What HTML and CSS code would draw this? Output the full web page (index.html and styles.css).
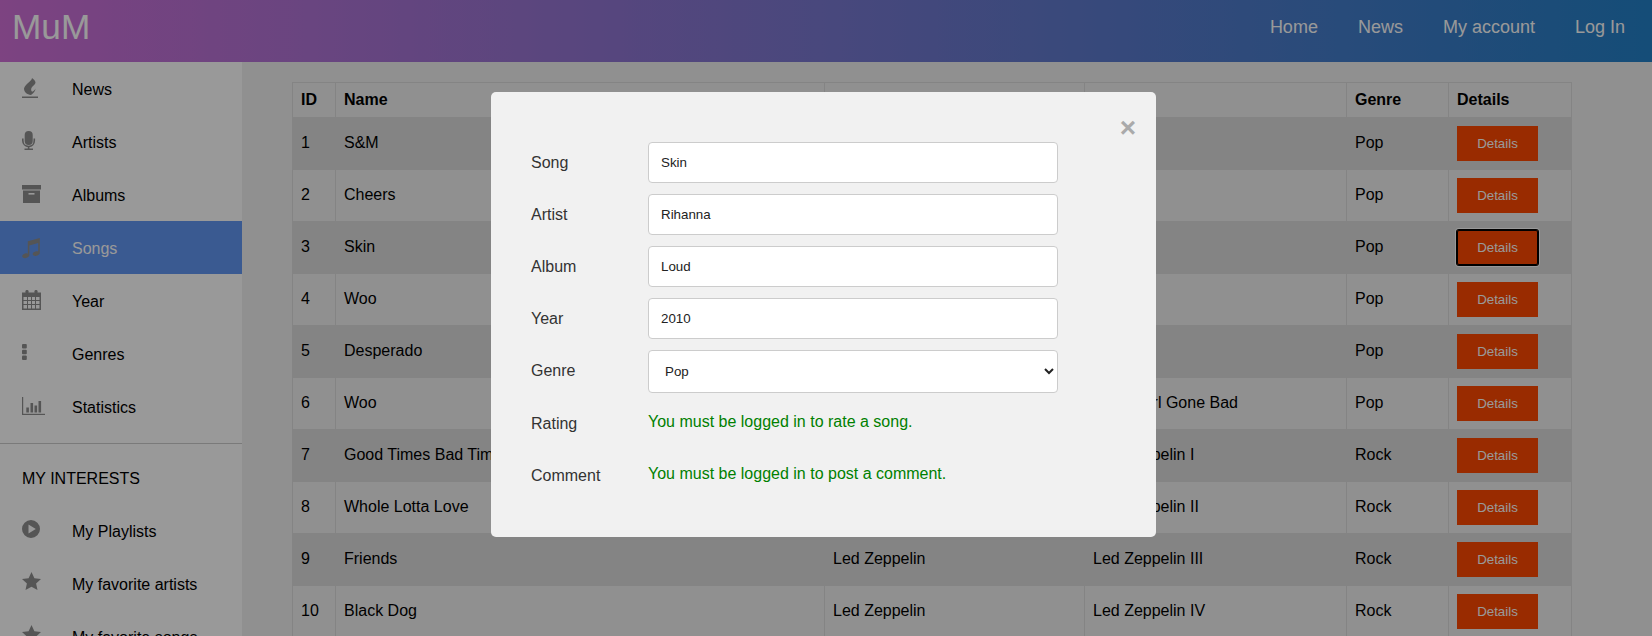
FILE: index.html
```html
<!DOCTYPE html>
<html lang="en">
<head>
  <meta charset="UTF-8">
  <meta name="viewport" content="width=device-width, initial-scale=1.0">
  <title>MuM - Songs</title>
  <link rel="stylesheet" href="styles.css">
</head>
<body>

<!-- Top bar -->
<header class="topbar">
  <a class="logo" href="#">MuM</a>
  <nav class="topnav">
    <a href="#">Home</a>
    <a href="#">News</a>
    <a href="#">My account</a>
    <a href="#">Log In</a>
  </nav>
</header>

<div class="layout">
  <!-- Sidebar -->
  <aside class="sidebar">
    <a class="side-item" href="#">
      <svg class="side-icon" viewBox="0 0 50 31"><path d="M10 5C10 8 3 11 2 15.500C2 19 5 21.500 9 22C11 20.500 13.500 18.500 13.500 15.500C13 17 11.500 18.500 10 18.800C8.500 17 9 15 10.500 13.500C12 12 13.500 11 13.500 9.500C13.500 7.500 11.500 6.500 10 5Z"/><rect x="0" y="23.500" width="16" height="1.500"/></svg>
      News
    </a>
    <a class="side-item" href="#">
      <svg class="side-icon" viewBox="0 0 50 31"><rect x="2.700" y="5" width="8" height="14" rx="4"/><path class="line" d="M.8 12.500V14.500C.8 18 3.300 20.500 6.700 20.500C10 20.500 12.300 18 12.300 14.500V12.500"/><rect x="5.800" y="20.500" width="1.600" height="2.500"/><rect x="2.500" y="22.500" width="8.500" height="1.500"/></svg>
      Artists
    </a>
    <a class="side-item" href="#">
      <svg class="side-icon" viewBox="0 0 50 31"><rect x="0" y="6" width="19" height="4.500"/><rect x="1" y="11.500" width="17" height="12.500"/><rect class="cut" x="6.500" y="14" width="6" height="1.600"/></svg>
      Albums
    </a>
    <a class="side-item active" href="#">
      <svg class="side-icon" viewBox="0 0 50 31"><path d="M17.800 6L5.800 9.200V21.800C5 21.300 4 21.200 3 21.500C1 22 0 23.400 .3 24.700C.7 25.900 2.300 26.500 4.200 26C6 25.500 7.400 24.300 7.400 23V13.500L16.200 11V19.600C15.400 19.200 14.400 19.100 13.400 19.400C11.500 19.900 10.400 21.200 10.700 22.500C11.100 23.700 12.800 24.300 14.600 23.800C16.500 23.300 17.800 22 17.800 20.700Z"/></svg>
      Songs
    </a>
    <a class="side-item" href="#">
      <svg class="side-icon" viewBox="0 0 50 31"><rect x="3.500" y="5" width="3" height="5" rx="1.200"/><rect x="12.500" y="5" width="3" height="5" rx="1.200"/><path d="M0 7.500H19V25H0ZM1.500 12V23.500H17.500V12Z" fill-rule="evenodd"/><path class="thin" d="M1 15.500H18M1 19.500H18M5.500 12V24M9.500 12V24M13.500 12V24"/></svg>
      Year
    </a>
    <a class="side-item" href="#">
      <svg class="side-icon" viewBox="0 0 50 31"><rect x="0" y="6" width="4.800" height="4.500" rx="1"/><rect x="0" y="11.800" width="4.800" height="4.500" rx="1"/><rect x="0" y="17.500" width="4.800" height="4.500" rx="1"/></svg>
      Genres
    </a>
    <a class="side-item" href="#">
      <svg class="side-icon" viewBox="0 0 50 31"><rect x="0" y="6" width="1.200" height="18"/><rect x="0" y="22.800" width="23" height="1.200"/><rect x="4.300" y="16.500" width="2.600" height="5"/><rect x="8.500" y="12" width="2.600" height="9.500"/><rect x="12.500" y="14.500" width="2.600" height="7"/><rect x="16.500" y="10" width="2.600" height="11.500"/></svg>
      Statistics
    </a>

    <div class="side-title">MY INTERESTS</div>

    <a class="side-item" href="#">
      <svg class="side-icon" viewBox="0 0 50 31"><path d="M9 5A9 9 0 1 1 9 23A9 9 0 1 1 9 5ZM6.500 9.500V18.500L13.800 14Z" fill-rule="evenodd"/></svg>
      My Playlists
    </a>
    <a class="side-item" href="#">
      <svg class="side-icon" viewBox="0 0 50 31"><path d="M9.500 4L12.400 10.300L19 11L14.100 15.500L15.500 22L9.500 18.700L3.500 22L4.900 15.500L0 11L6.600 10.300Z"/></svg>
      My favorite artists
    </a>
    <a class="side-item" href="#">
      <svg class="side-icon" viewBox="0 0 50 31"><path d="M9.500 4L12.400 10.300L19 11L14.100 15.500L15.500 22L9.500 18.700L3.500 22L4.900 15.500L0 11L6.600 10.300Z"/></svg>
      My favorite songs
    </a>
  </aside>

  <!-- Song table -->
  <main class="content">
    <table class="songs">
      <colgroup>
        <col class="col-id">
        <col class="col-name">
        <col class="col-artist">
        <col class="col-album">
        <col class="col-genre">
        <col class="col-details">
      </colgroup>
      <thead>
        <tr><th>ID</th><th>Name</th><th>Artist</th><th>Album</th><th>Genre</th><th>Details</th></tr>
      </thead>
      <tbody>
        <tr><td>1</td><td>S&amp;M</td><td>Rihanna</td><td>Loud</td><td>Pop</td><td class="btn-cell"><button class="details-btn">Details</button></td></tr>
        <tr><td>2</td><td>Cheers</td><td>Rihanna</td><td>Loud</td><td>Pop</td><td class="btn-cell"><button class="details-btn">Details</button></td></tr>
        <tr><td>3</td><td>Skin</td><td>Rihanna</td><td>Loud</td><td>Pop</td><td class="btn-cell"><button class="details-btn focused">Details</button></td></tr>
        <tr><td>4</td><td>Woo</td><td>Rihanna</td><td>Anti</td><td>Pop</td><td class="btn-cell"><button class="details-btn">Details</button></td></tr>
        <tr><td>5</td><td>Desperado</td><td>Rihanna</td><td>Anti</td><td>Pop</td><td class="btn-cell"><button class="details-btn">Details</button></td></tr>
        <tr><td>6</td><td>Woo</td><td>Rihanna</td><td>Good Girl Gone Bad</td><td>Pop</td><td class="btn-cell"><button class="details-btn">Details</button></td></tr>
        <tr><td>7</td><td>Good Times Bad Times</td><td>Led Zeppelin</td><td>Led Zeppelin I</td><td>Rock</td><td class="btn-cell"><button class="details-btn">Details</button></td></tr>
        <tr><td>8</td><td>Whole Lotta Love</td><td>Led Zeppelin</td><td>Led Zeppelin II</td><td>Rock</td><td class="btn-cell"><button class="details-btn">Details</button></td></tr>
        <tr><td>9</td><td>Friends</td><td>Led Zeppelin</td><td>Led Zeppelin III</td><td>Rock</td><td class="btn-cell"><button class="details-btn">Details</button></td></tr>
        <tr><td>10</td><td>Black Dog</td><td>Led Zeppelin</td><td>Led Zeppelin IV</td><td>Rock</td><td class="btn-cell"><button class="details-btn">Details</button></td></tr>
      </tbody>
    </table>
  </main>
</div>

<!-- Song details modal -->
<div class="overlay">
  <div class="modal">
    <span class="close">&times;</span>
    <form>
      <div class="form-row">
        <label for="song">Song</label>
        <input type="text" id="song" value="Skin">
      </div>
      <div class="form-row">
        <label for="artist">Artist</label>
        <input type="text" id="artist" value="Rihanna">
      </div>
      <div class="form-row">
        <label for="album">Album</label>
        <input type="text" id="album" value="Loud">
      </div>
      <div class="form-row">
        <label for="year">Year</label>
        <input type="text" id="year" value="2010">
      </div>
      <div class="form-row select-row">
        <label for="genre">Genre</label>
        <select id="genre"><option>Pop</option><option>Rock</option></select>
      </div>
      <div class="form-row">
        <label>Rating</label>
        <p class="login-note">You must be logged in to rate a song.</p>
      </div>
      <div class="form-row">
        <label>Comment</label>
        <p class="login-note">You must be logged in to post a comment.</p>
      </div>
    </form>
  </div>
</div>

</body>
</html>
```

FILE: styles.css
```css
html, body {
  height: 100%;
}

body {
  margin: 0;
  overflow: hidden;
  font-family: "Liberation Sans", Arial, sans-serif;
  font-size: 16px;
  color: #000;
  background-color: #f1f1f1;
}

a {
  text-decoration: none;
  color: inherit;
}

/* Top bar */
.topbar {
  display: flex;
  justify-content: space-between;
  height: 62px;
  padding: 0 27px 0 12px;
  box-sizing: border-box;
  background: linear-gradient(to right, #d070d8, #2380c8);
  color: #fff;
}

.logo {
  font-size: 35.2px;
  line-height: 53px;
}

.topnav {
  display: flex;
  gap: 40px;
  font-size: 18px;
  line-height: 54px;
}

/* Sidebar */
.layout {
  display: flex;
}

.sidebar {
  width: 242px;
  flex-shrink: 0;
  height: 574px;
  overflow: hidden;
  background-color: #fff;
}

.side-item {
  display: flex;
  align-items: center;
  height: 53px;
  padding: 2px 0 0 22px;
  box-sizing: border-box;
  line-height: 20px;
}

.side-item.active {
  background-color: #6296f2;
  color: #fff;
}

.side-icon {
  width: 50px;
  height: 31px;
  flex-shrink: 0;
  margin-top: -2px;
  fill: #8e8e8e;
}

.side-icon .line {
  fill: none;
  stroke: #8e8e8e;
  stroke-width: 1.6;
}

.side-icon .thin {
  fill: none;
  stroke: #8e8e8e;
  stroke-width: 1;
}

.side-icon .cut {
  fill: #fff;
}

.side-title {
  margin-top: 10px;
  padding: 26px 22px 16px;
  border-top: 1px solid #ccc;
  line-height: 18px;
}

/* Song table */
.content {
  flex: 1;
  padding: 20px 80px 0 50px;
}

.songs {
  width: 1279px;
  table-layout: fixed;
  border-collapse: collapse;
}

.col-id { width: 43px; }
.col-name { width: 489px; }
.col-artist { width: 260px; }
.col-album { width: 262px; }
.col-genre { width: 102px; }
.col-details { width: 123px; }

.songs th,
.songs td {
  padding: 8px;
  border: 1px solid #ddd;
  text-align: left;
  line-height: 18px;
}

.songs td {
  padding: 7px 8px 9px;
}

.songs td.btn-cell {
  padding: 8px;
}

.songs tbody tr:nth-child(odd) {
  background-color: #ddd;
}

.details-btn {
  display: block;
  width: 81px;
  height: 35px;
  padding: 0;
  border: none;
  background-color: #ff4800;
  color: #fff;
  font-family: "Liberation Sans", Arial, sans-serif;
  font-size: 13.33px;
}

.details-btn.focused {
  border-radius: 2px;
  box-shadow: 0 0 0 1px #000, 0 0 0 2px #fff;
  outline: 1px solid #000;
  outline-offset: -1px;
}

/* Modal */
.overlay {
  position: fixed;
  top: 0;
  left: 0;
  right: 0;
  bottom: 0;
  display: flex;
  justify-content: center;
  align-items: flex-start;
  padding: 92px 5px 0 0;
  background-color: rgba(0, 0, 0, 0.4);
}

.modal {
  position: relative;
  width: 665px;
  height: 445px;
  padding: 50px 0 0 40px;
  box-sizing: border-box;
  border-radius: 5px;
  background-color: #f1f1f1;
  color: #333;
}

.close {
  position: absolute;
  top: 20px;
  right: 20px;
  color: #aaa;
  font-size: 28px;
  font-weight: bold;
  line-height: 32px;
}

.form-row {
  display: flex;
  margin-bottom: 11px;
  min-height: 41px;
}

.form-row.select-row {
  margin-bottom: 10px;
}

.form-row label {
  width: 117px;
  flex-shrink: 0;
  padding-top: 11px;
  line-height: 20px;
}

.form-row input,
.form-row select {
  width: 410px;
  box-sizing: border-box;
  border: 1px solid #ccc;
  border-radius: 4px;
  background-color: #fff;
  color: #222;
  font-family: "Liberation Sans", Arial, sans-serif;
  font-size: 13.33px;
}

.form-row input {
  height: 41px;
  padding: 0 12px;
}

.form-row select {
  height: 43px;
  padding: 0 12px;
}

.login-note {
  margin: 9px 0 0;
  line-height: 20px;
  color: green;
}
```
